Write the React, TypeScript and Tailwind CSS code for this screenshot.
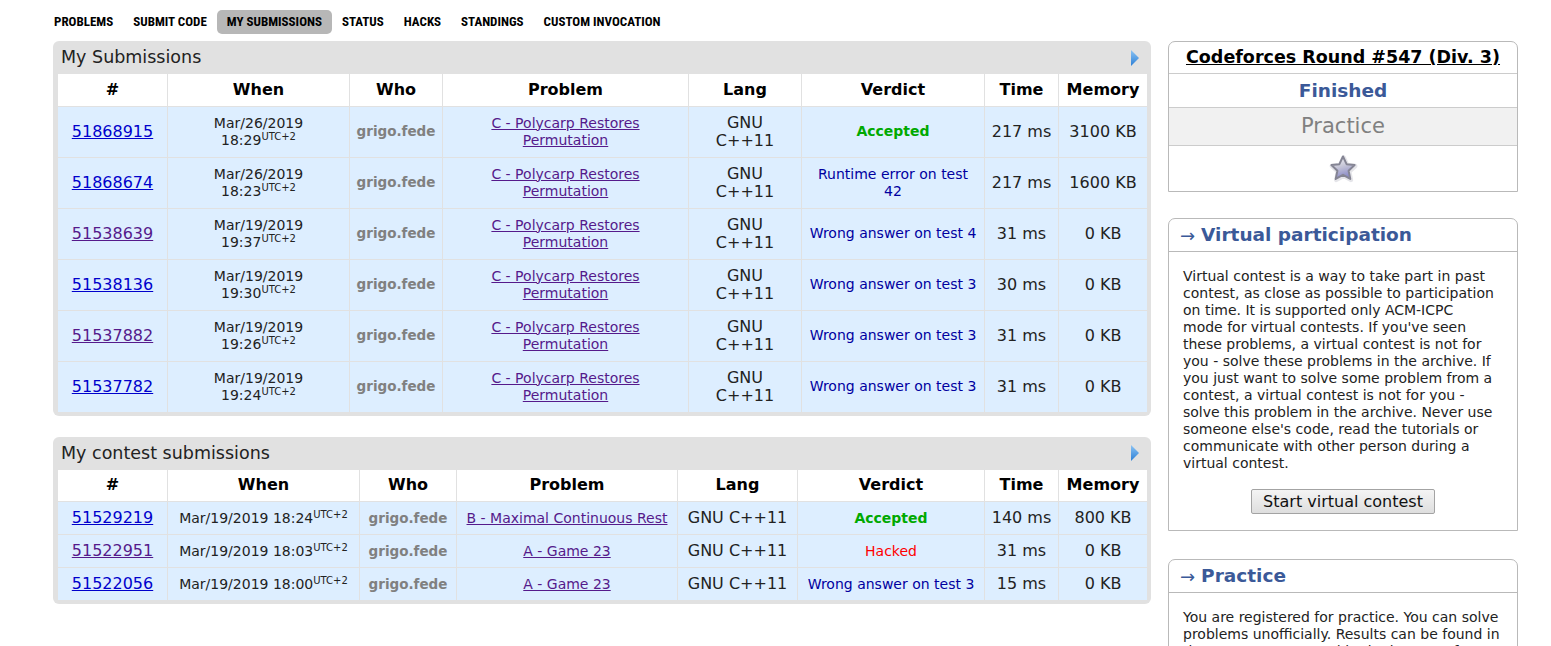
import React from 'react'

// ─── Data ─────────────────────────────────────────────

type Verdict = 'ok' | 'wa' | 'hacked'

interface Sub {
  id: string
  visited: boolean
  date: string
  time: string
  problem: [string, string?]
  verdict: string
  kind: Verdict
  ms: string
  kb: string
}

const MY: Sub[] = [
  { id: '51868915', visited: false, date: 'Mar/26/2019', time: '18:29', problem: ['C - Polycarp Restores', 'Permutation'], verdict: 'Accepted', kind: 'ok', ms: '217 ms', kb: '3100 KB' },
  { id: '51868674', visited: false, date: 'Mar/26/2019', time: '18:23', problem: ['C - Polycarp Restores', 'Permutation'], verdict: 'Runtime error on test 42', kind: 'wa', ms: '217 ms', kb: '1600 KB' },
  { id: '51538639', visited: true, date: 'Mar/19/2019', time: '19:37', problem: ['C - Polycarp Restores', 'Permutation'], verdict: 'Wrong answer on test 4', kind: 'wa', ms: '31 ms', kb: '0 KB' },
  { id: '51538136', visited: false, date: 'Mar/19/2019', time: '19:30', problem: ['C - Polycarp Restores', 'Permutation'], verdict: 'Wrong answer on test 3', kind: 'wa', ms: '30 ms', kb: '0 KB' },
  { id: '51537882', visited: true, date: 'Mar/19/2019', time: '19:26', problem: ['C - Polycarp Restores', 'Permutation'], verdict: 'Wrong answer on test 3', kind: 'wa', ms: '31 ms', kb: '0 KB' },
  { id: '51537782', visited: false, date: 'Mar/19/2019', time: '19:24', problem: ['C - Polycarp Restores', 'Permutation'], verdict: 'Wrong answer on test 3', kind: 'wa', ms: '31 ms', kb: '0 KB' },
]

const CONTEST: Sub[] = [
  { id: '51529219', visited: false, date: 'Mar/19/2019', time: '18:24', problem: ['B - Maximal Continuous Rest'], verdict: 'Accepted', kind: 'ok', ms: '140 ms', kb: '800 KB' },
  { id: '51522951', visited: true, date: 'Mar/19/2019', time: '18:03', problem: ['A - Game 23'], verdict: 'Hacked', kind: 'hacked', ms: '31 ms', kb: '0 KB' },
  { id: '51522056', visited: false, date: 'Mar/19/2019', time: '18:00', problem: ['A - Game 23'], verdict: 'Wrong answer on test 3', kind: 'wa', ms: '15 ms', kb: '0 KB' },
]

const NAV = ['PROBLEMS', 'SUBMIT CODE', 'MY SUBMISSIONS', 'STATUS', 'HACKS', 'STANDINGS', 'CUSTOM INVOCATION']

const VERDICT_CLS: Record<Verdict, string> = {
  ok: 'font-bold text-[#00a900]',
  wa: 'text-[#0000a0]',
  hacked: 'text-[#ff0000]',
}

// ─── Icons ───────────────────────────────────────────

function BlueArrow() {
  return (
    <svg width="10" height="16" viewBox="0 0 10 16">
      <defs>
        <linearGradient id="ba" x1="0" y1="0" x2="0" y2="1">
          <stop offset="0" stopColor="#8cc4f4" />
          <stop offset="1" stopColor="#2b7fd6" />
        </linearGradient>
      </defs>
      <polygon points="1,0 9,8 1,16" fill="url(#ba)" />
    </svg>
  )
}

const STAR_D = 'M16 3.5 L19.6 11.2 L27.6 12.1 L21.6 17.7 L23.3 25.9 L16 21.8 L8.7 25.9 L10.4 17.7 L4.4 12.1 L12.4 11.2 Z'

function Star() {
  return (
    <svg width="32" height="32" viewBox="0 0 32 32">
      <defs>
        <linearGradient id="st" x1="0.2" y1="0" x2="0.5" y2="1">
          <stop offset="0" stopColor="#f2f2f4" />
          <stop offset="0.45" stopColor="#c8c8d8" />
          <stop offset="1" stopColor="#8484c6" />
        </linearGradient>
      </defs>
      <path d={STAR_D} fill="#d4d4dc" stroke="#d4d4dc" strokeWidth="4.5" strokeLinejoin="round" opacity="0.6" transform="translate(0.6 1)" />
      <path d={STAR_D} fill="url(#st)" stroke="#858594" strokeWidth="2" strokeLinejoin="round" />
    </svg>
  )
}

// ─── Table ───────────────────────────────────────────

const TD = 'border border-[#e1e1e1] text-center align-middle'

function SubTable({ title, rows, cols, tall }: { title: string; rows: Sub[]; cols: number[]; tall: boolean }) {
  return (
    <div className="rounded-[6px] bg-[#e1e1e1] px-[4px] pb-[3px]">
      <div className="flex h-[33px] items-center justify-between pl-[4px] pr-[7px]">
        <span className="text-[17.5px] text-[#222]">{title}</span>
        <BlueArrow />
      </div>
      <table className="w-full table-fixed border-collapse bg-white">
        <colgroup>
          {cols.map((w, i) => <col key={i} style={{ width: w }} />)}
        </colgroup>
        <thead>
          <tr className="h-[32px] text-[16px] font-bold text-black">
            {['#', 'When', 'Who', 'Problem', 'Lang', 'Verdict', 'Time', 'Memory'].map((h) => (
              <th key={h} className="border border-[#e1e1e1] border-t-0 text-center font-bold">{h}</th>
            ))}
          </tr>
        </thead>
        <tbody>
          {rows.map((r) => (
            <tr key={r.id} className={`${tall ? 'h-[51px]' : 'h-[33px]'} bg-[#ddeeff] text-[#222]`}>
              <td className={`${TD} text-[16px]`}>
                <a className={`underline ${r.visited ? 'text-[#551a8b]' : 'text-[#0000cc]'}`}>{r.id}</a>
              </td>
              <td className={`${TD} text-[14px] leading-[17px]`}>
                {tall ? (
                  <>
                    <div>{r.date}</div>
                    <div>{r.time}<sup className="text-[10px]">UTC+2</sup></div>
                  </>
                ) : (
                  <span>{r.date} {r.time}<sup className="text-[10px]">UTC+2</sup></span>
                )}
              </td>
              <td className={`${TD} text-[13.5px] font-bold text-[#808080]`}>grigo.fede</td>
              <td className={`${TD} text-[14px] leading-[17px]`}>
                <a className="text-[#551a8b] underline">{r.problem[0]}</a>
                {r.problem[1] && (
                  <div><a className="text-[#551a8b] underline">{r.problem[1]}</a></div>
                )}
              </td>
              <td className={`${TD} text-[16px] leading-[18px]`}>
                {tall ? (<><div>GNU</div><div>C++11</div></>) : 'GNU C++11'}
              </td>
              <td className={`${TD} px-[6px] text-[14px] leading-[17px] ${VERDICT_CLS[r.kind]}`}>{r.verdict}</td>
              <td className={`${TD} text-[16px]`}>{r.ms}</td>
              <td className={`${TD} text-[16px]`}>{r.kb}</td>
            </tr>
          ))}
        </tbody>
      </table>
    </div>
  )
}

// ─── Sidebar ─────────────────────────────────────────

function SideBox({ title, children }: { title: string; children: React.ReactNode }) {
  return (
    <div className="rounded-t-[7px] border border-[#b9b9b9]">
      <div className="flex h-[33px] items-center border-b border-[#b9b9b9] pl-[11px] text-[#3b5998]">
        <span className="mr-[6px] text-[18px]">→</span>
        <span className="text-[18.5px] font-bold">{title}</span>
      </div>
      {children}
    </div>
  )
}

// ─── Page ────────────────────────────────────────────

export default function App() {
  return (
    <div className="h-[646px] overflow-hidden bg-white font-['DejaVu_Sans',Verdana,sans-serif] text-[#222]">
      <nav className="flex pl-[44px] pt-[10px]">
        {NAV.map((n) => (
          <span
            key={n}
            className={`flex h-[24px] items-center rounded-[5px] px-[10px] font-['Liberation_Sans_Narrow','Roboto_Condensed','Liberation_Sans',sans-serif] text-[13px] font-bold text-black ${n === 'MY SUBMISSIONS' ? 'bg-[#b7b7b7]' : ''}`}
          >
            {n}
          </span>
        ))}
      </nav>

      <div className="mt-[7px] flex pl-[53px]">
        <main className="w-[1098px]">
          <SubTable title="My Submissions" rows={MY} cols={[110, 182, 93, 246, 113, 183, 74, 89]} tall />
          <div className="h-[21px]" />
          <SubTable title="My contest submissions" rows={CONTEST} cols={[110, 192, 97, 221, 120, 187, 74, 89]} tall={false} />
        </main>

        <aside className="ml-[17px] w-[350px]">
          <div className="rounded-t-[7px] border border-[#b9b9b9] text-center">
            <div className="flex h-[32px] items-center justify-center border-b border-[#cccccc]">
              <a className="text-[17.5px] font-bold text-black underline">Codeforces Round #547 (Div. 3)</a>
            </div>
            <div className="flex h-[34px] items-center justify-center border-b border-[#cccccc] text-[18.5px] font-bold text-[#3b5998]">
              Finished
            </div>
            <div className="flex h-[38px] items-center justify-center border-b border-[#cccccc] bg-[#f1f1f1] text-[21px] text-[#808080]">
              Practice
            </div>
            <div className="flex h-[45px] items-center justify-center">
              <Star />
            </div>
          </div>

          <div className="mt-[26px]">
            <SideBox title="Virtual participation">
              <div className="pb-[16px] pl-[14px] pr-[22px] pt-[16px] text-[14px] leading-[17px] text-[#222]">
                <p>
                  Virtual contest is a way to take part in past contest, as close as possible to participation
                  on time. It is supported only ACM-ICPC mode for virtual contests. If you've seen these problems,
                  a virtual contest is not for you - solve these problems in the archive. If you just want to solve
                  some problem from a contest, a virtual contest is not for you - solve this problem in the archive.
                  Never use someone else's code, read the tutorials or communicate with other person during a
                  virtual contest.
                </p>
                <div className="mt-[17px] flex justify-center pl-[8px]">
                  <button className="h-[25px] rounded-[2px] border border-[#a3a3a3] bg-gradient-to-b from-[#f4f4f4] to-[#dedede] px-[11px] text-[16px] text-[#111]">
                    Start virtual contest
                  </button>
                </div>
              </div>
            </SideBox>
          </div>

          <div className="mt-[28px]">
            <SideBox title="Practice">
              <div className="pl-[14px] pr-[12px] pt-[16px] text-[14px] leading-[17px] text-[#222]">
                <p>
                  You are registered for practice. You can solve problems unofficially. Results can be found in
                  the contest status and in the bottom of standings.
                </p>
              </div>
            </SideBox>
          </div>
        </aside>
      </div>
    </div>
  )
}
